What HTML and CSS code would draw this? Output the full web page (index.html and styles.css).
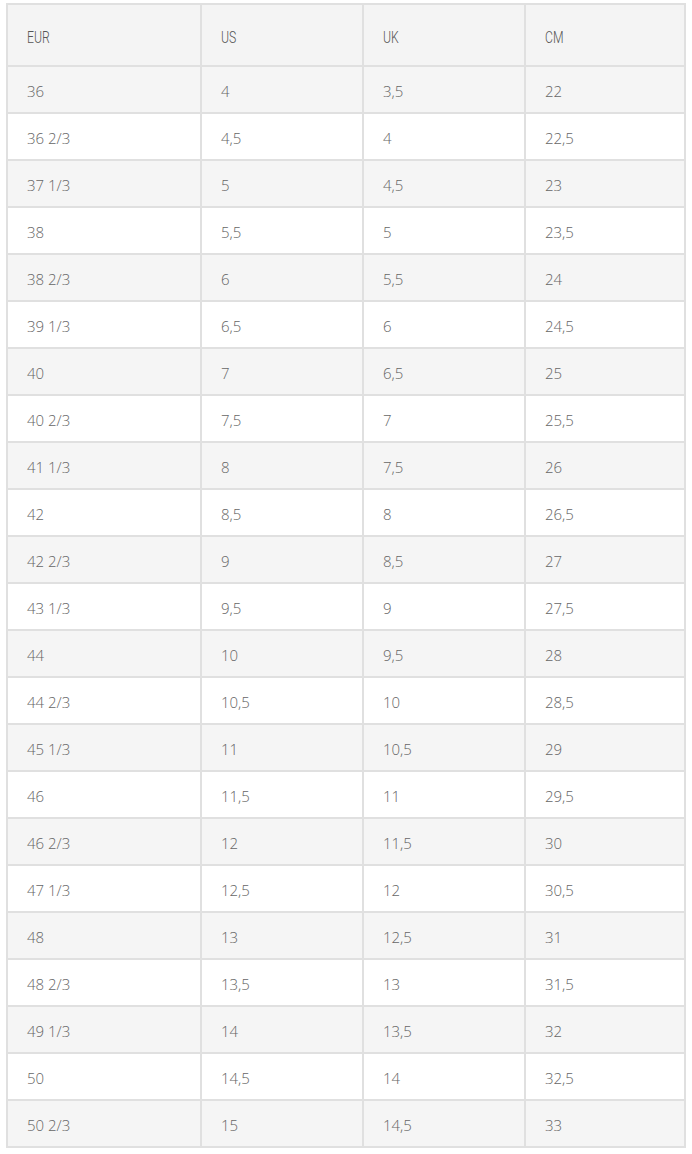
FILE: index.html
```html
<!DOCTYPE html>
<html lang="en">
<head>
<meta charset="utf-8">
<title>Size chart</title>
<link rel="stylesheet" href="styles.css">
</head>
<body>
<table class="sizes">
  <colgroup>
    <col class="c1"><col class="c2"><col class="c3"><col class="c4">
  </colgroup>
  <thead>
    <tr><th><span class="hd">EUR</span></th><th><span class="hd">US</span></th><th><span class="hd">UK</span></th><th><span class="hd">CM</span></th></tr>
  </thead>
  <tbody>
    <tr><td>36</td><td>4</td><td>3,5</td><td>22</td></tr>
    <tr><td>36 2/3</td><td>4,5</td><td>4</td><td>22,5</td></tr>
    <tr><td>37 1/3</td><td>5</td><td>4,5</td><td>23</td></tr>
    <tr><td>38</td><td>5,5</td><td>5</td><td>23,5</td></tr>
    <tr><td>38 2/3</td><td>6</td><td>5,5</td><td>24</td></tr>
    <tr><td>39 1/3</td><td>6,5</td><td>6</td><td>24,5</td></tr>
    <tr><td>40</td><td>7</td><td>6,5</td><td>25</td></tr>
    <tr><td>40 2/3</td><td>7,5</td><td>7</td><td>25,5</td></tr>
    <tr><td>41 1/3</td><td>8</td><td>7,5</td><td>26</td></tr>
    <tr><td>42</td><td>8,5</td><td>8</td><td>26,5</td></tr>
    <tr><td>42 2/3</td><td>9</td><td>8,5</td><td>27</td></tr>
    <tr><td>43 1/3</td><td>9,5</td><td>9</td><td>27,5</td></tr>
    <tr><td>44</td><td>10</td><td>9,5</td><td>28</td></tr>
    <tr><td>44 2/3</td><td>10,5</td><td>10</td><td>28,5</td></tr>
    <tr><td>45 1/3</td><td>11</td><td>10,5</td><td>29</td></tr>
    <tr><td>46</td><td>11,5</td><td>11</td><td>29,5</td></tr>
    <tr><td>46 2/3</td><td>12</td><td>11,5</td><td>30</td></tr>
    <tr><td>47 1/3</td><td>12,5</td><td>12</td><td>30,5</td></tr>
    <tr><td>48</td><td>13</td><td>12,5</td><td>31</td></tr>
    <tr><td>48 2/3</td><td>13,5</td><td>13</td><td>31,5</td></tr>
    <tr><td>49 1/3</td><td>14</td><td>13,5</td><td>32</td></tr>
    <tr><td>50</td><td>14,5</td><td>14</td><td>32,5</td></tr>
    <tr><td>50 2/3</td><td>15</td><td>14,5</td><td>33</td></tr>
  </tbody>
</table>
</body>
</html>
```

FILE: styles.css
```css
html, body {
  margin: 0;
  padding: 0;
  background: #fff;
}
body {
  padding: 3px 0 0 6px;
  font-family: "Open Sans", "Liberation Sans", sans-serif;
  font-weight: 300;
  color: #666;
}
.sizes {
  border-collapse: separate;
  border-spacing: 0;
  table-layout: fixed;
  width: 680px;
  border-left: 2px solid #e0e0e0;
  border-top: 2px solid #e0e0e0;
}
.c1 { width: 194px; }
.c2 { width: 162px; }
.c3 { width: 162px; }
.c4 { width: 160px; }
.sizes th,
.sizes td {
  box-sizing: border-box;
  border-right: 2px solid #e0e0e0;
  border-bottom: 2px solid #e0e0e0;
  padding: 0 0 0 19px;
  text-align: left;
  vertical-align: middle;
}
.sizes th {
  height: 62px;
  background: #f4f4f4;
  font-weight: 300;
  font-size: 17px;
  padding-top: 2px;
}
.hd {
  display: inline-block;
  font-family: "Roboto", "Open Sans", sans-serif;
  font-weight: 300;
  transform: scaleX(0.72);
  transform-origin: left center;
  color: #555;
}
.sizes td {
  height: 47px;
  font-size: 15px;
  padding-top: 2px;
  color: #666;
}
.sizes tbody tr:nth-child(odd) td { background: #f5f5f5; }
.sizes tbody tr:nth-child(even) td { background: #fff; }
```
